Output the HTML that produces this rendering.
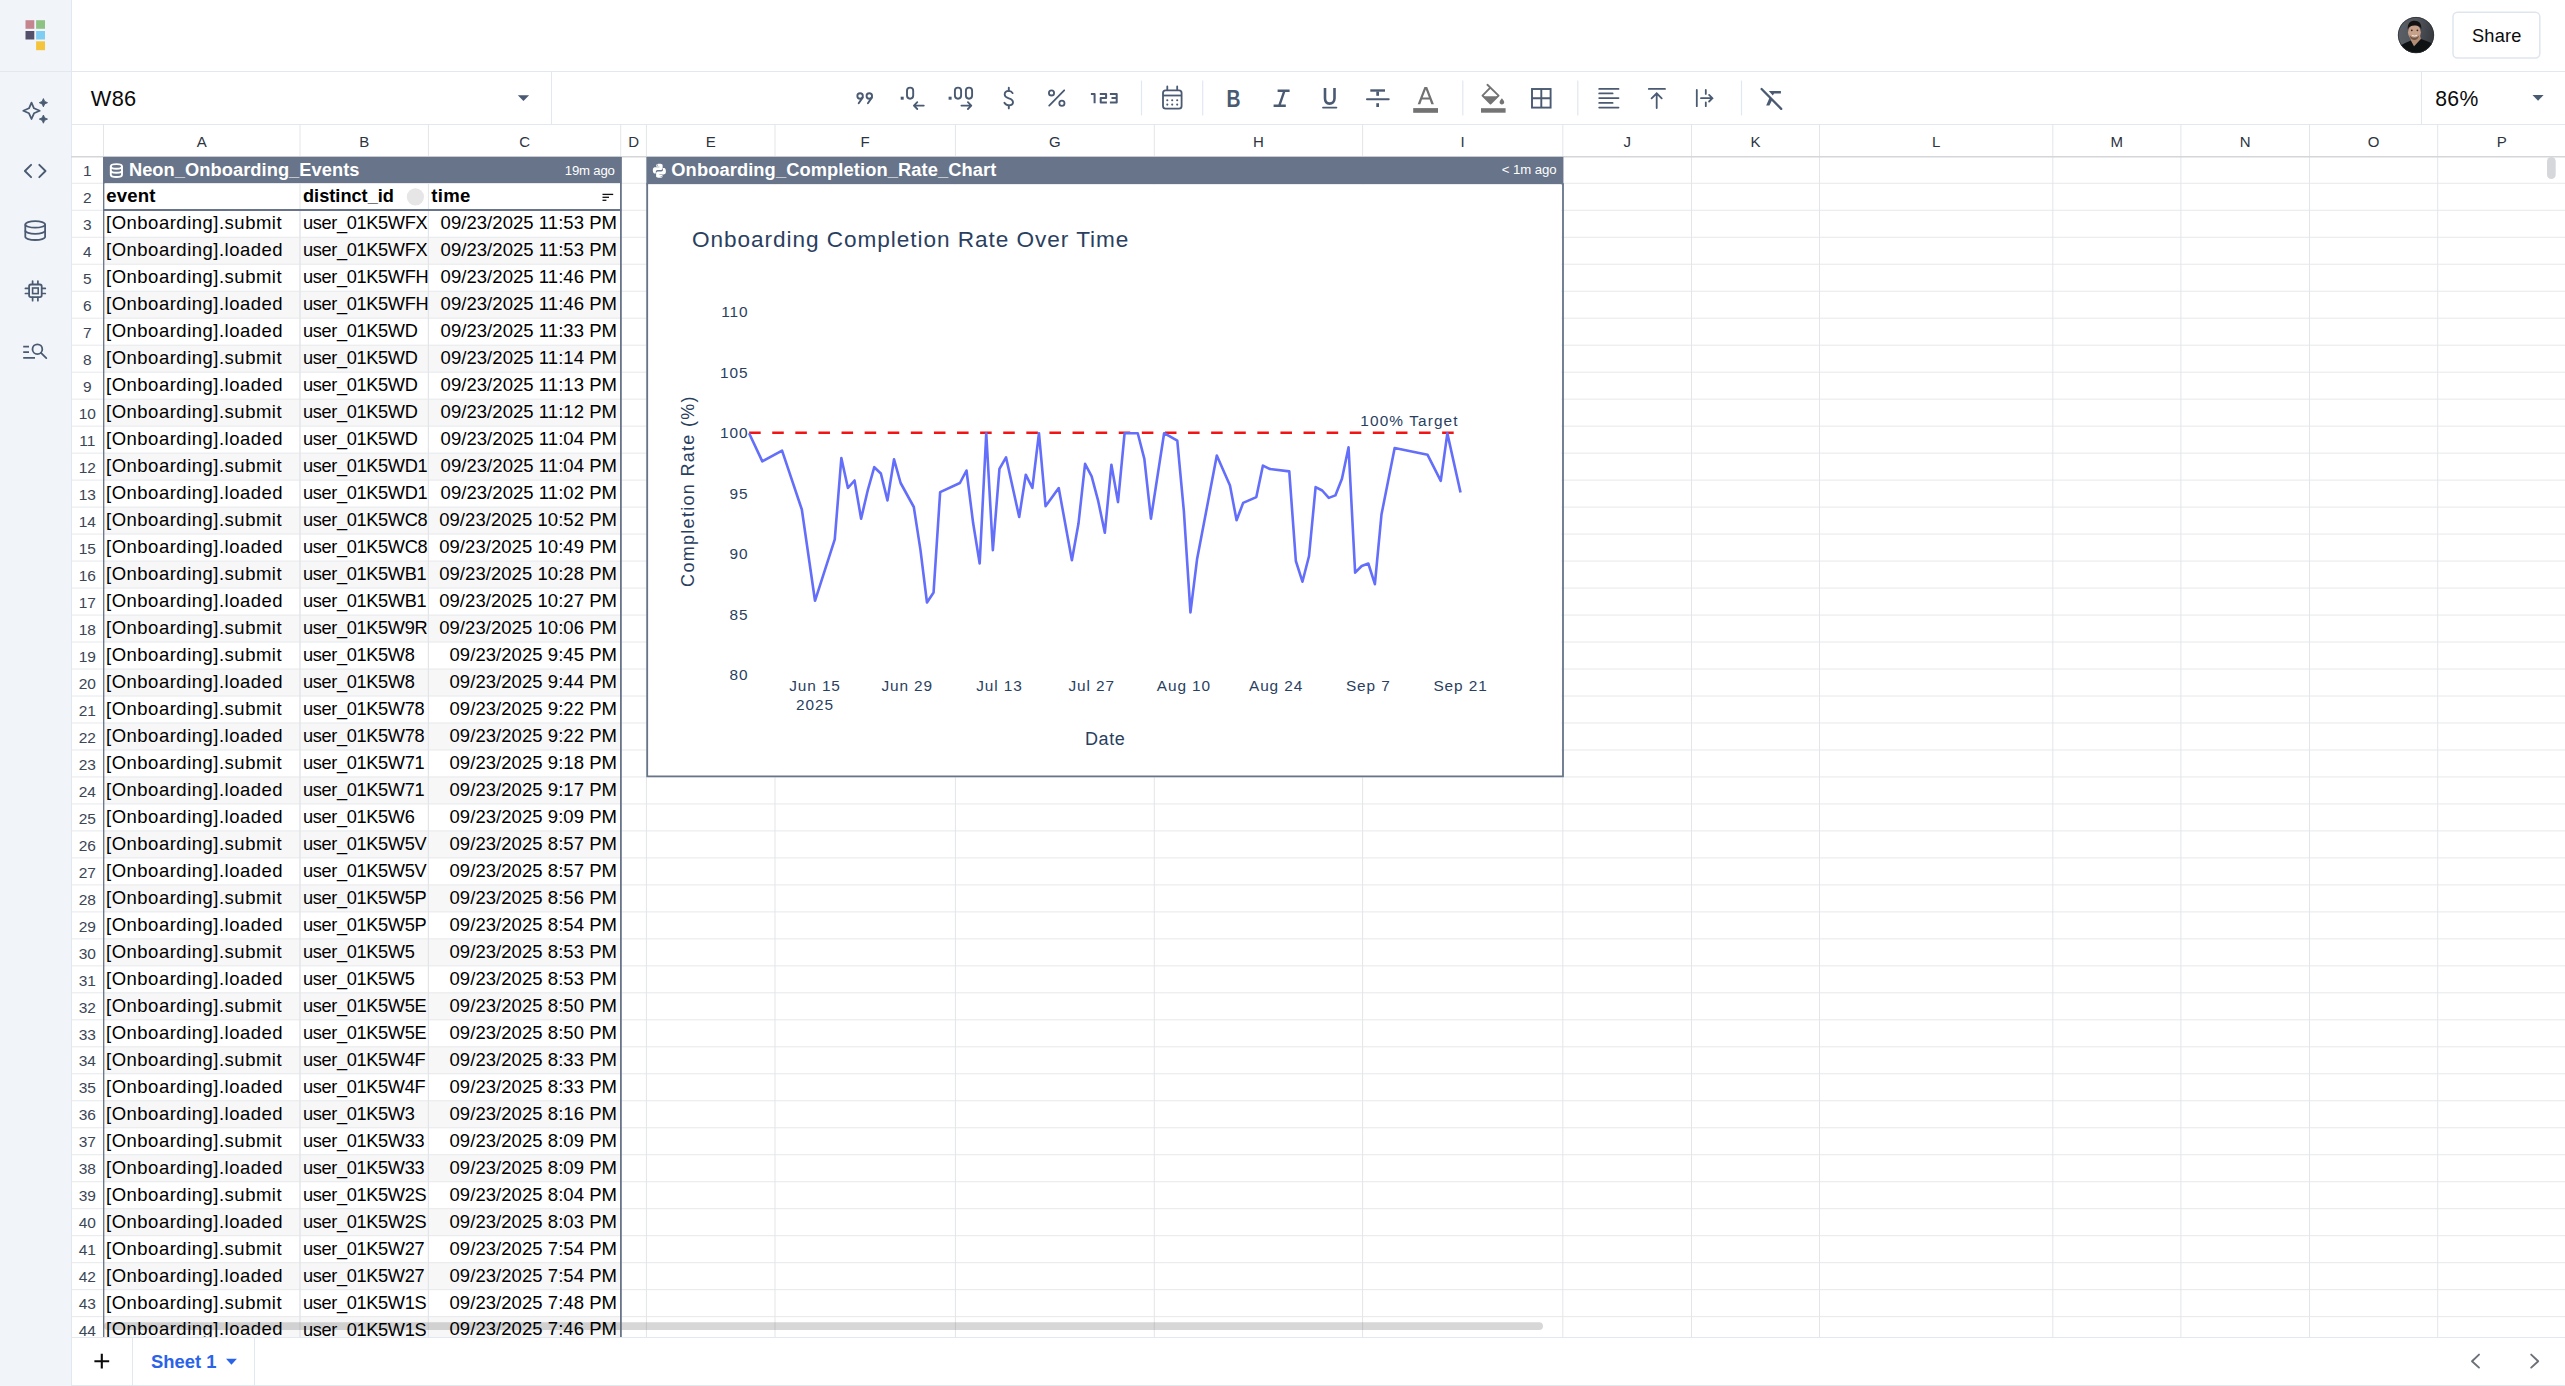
<!DOCTYPE html>
<html><head><meta charset="utf-8"><title>Spreadsheet</title>
<style>
html,body{margin:0;padding:0;width:2565px;height:1386px;overflow:hidden;background:#fff;}
body{font-family:"Liberation Sans", sans-serif;position:relative;}
.abs{position:absolute;}
.t{position:absolute;white-space:pre;font-family:"Liberation Sans", sans-serif;}
</style></head><body>
<div class="abs" style="left:0;top:0;width:71px;height:1386px;background:#f1f5f9;"></div>
<div class="abs" style="left:71px;top:0;width:1px;height:1386px;background:#e2e8f0;"></div>
<div class="abs" style="left:0;top:70.5px;width:2565px;height:1.3px;background:#e2e8f0;"></div>
<div class="abs" style="left:72px;top:123.8px;width:2493px;height:1.3px;background:#e2e8f0;"></div>
<div class="abs" style="left:551px;top:71px;width:1.2px;height:53px;background:#e2e8f0;"></div>
<div class="abs" style="left:2421.2px;top:71px;width:1.2px;height:53px;background:#e2e8f0;"></div>
<svg class="abs" style="left:0;top:0" width="2565" height="1386" viewBox="0 0 2565 1386"><rect x="103.5" y="237.25" width="517.20" height="26.99" fill="#f7f7f7"/><rect x="103.5" y="291.23" width="517.20" height="26.99" fill="#f7f7f7"/><rect x="103.5" y="345.19" width="517.20" height="26.99" fill="#f7f7f7"/><rect x="103.5" y="399.17" width="517.20" height="26.99" fill="#f7f7f7"/><rect x="103.5" y="453.13" width="517.20" height="26.99" fill="#f7f7f7"/><rect x="103.5" y="507.11" width="517.20" height="26.98" fill="#f7f7f7"/><rect x="103.5" y="561.08" width="517.20" height="26.98" fill="#f7f7f7"/><rect x="103.5" y="615.05" width="517.20" height="26.98" fill="#f7f7f7"/><rect x="103.5" y="669.02" width="517.20" height="26.98" fill="#f7f7f7"/><rect x="103.5" y="722.98" width="517.20" height="26.99" fill="#f7f7f7"/><rect x="103.5" y="776.95" width="517.20" height="26.99" fill="#f7f7f7"/><rect x="103.5" y="830.92" width="517.20" height="26.99" fill="#f7f7f7"/><rect x="103.5" y="884.89" width="517.20" height="26.98" fill="#f7f7f7"/><rect x="103.5" y="938.87" width="517.20" height="26.98" fill="#f7f7f7"/><rect x="103.5" y="992.84" width="517.20" height="26.98" fill="#f7f7f7"/><rect x="103.5" y="1046.81" width="517.20" height="26.98" fill="#f7f7f7"/><rect x="103.5" y="1100.78" width="517.20" height="26.98" fill="#f7f7f7"/><rect x="103.5" y="1154.74" width="517.20" height="26.99" fill="#f7f7f7"/><rect x="103.5" y="1208.71" width="517.20" height="26.99" fill="#f7f7f7"/><rect x="103.5" y="1262.68" width="517.20" height="26.98" fill="#f7f7f7"/><rect x="103.5" y="1316.65" width="517.20" height="20.55" fill="#f7f7f7"/><line x1="71" y1="183.29" x2="2565" y2="183.29" stroke="#e6e8eb" stroke-width="1"/><line x1="71" y1="210.27" x2="2565" y2="210.27" stroke="#e6e8eb" stroke-width="1"/><line x1="71" y1="237.25" x2="2565" y2="237.25" stroke="#e6e8eb" stroke-width="1"/><line x1="71" y1="264.24" x2="2565" y2="264.24" stroke="#e6e8eb" stroke-width="1"/><line x1="71" y1="291.23" x2="2565" y2="291.23" stroke="#e6e8eb" stroke-width="1"/><line x1="71" y1="318.21" x2="2565" y2="318.21" stroke="#e6e8eb" stroke-width="1"/><line x1="71" y1="345.19" x2="2565" y2="345.19" stroke="#e6e8eb" stroke-width="1"/><line x1="71" y1="372.18" x2="2565" y2="372.18" stroke="#e6e8eb" stroke-width="1"/><line x1="71" y1="399.17" x2="2565" y2="399.17" stroke="#e6e8eb" stroke-width="1"/><line x1="71" y1="426.15" x2="2565" y2="426.15" stroke="#e6e8eb" stroke-width="1"/><line x1="71" y1="453.13" x2="2565" y2="453.13" stroke="#e6e8eb" stroke-width="1"/><line x1="71" y1="480.12" x2="2565" y2="480.12" stroke="#e6e8eb" stroke-width="1"/><line x1="71" y1="507.11" x2="2565" y2="507.11" stroke="#e6e8eb" stroke-width="1"/><line x1="71" y1="534.09" x2="2565" y2="534.09" stroke="#e6e8eb" stroke-width="1"/><line x1="71" y1="561.08" x2="2565" y2="561.08" stroke="#e6e8eb" stroke-width="1"/><line x1="71" y1="588.06" x2="2565" y2="588.06" stroke="#e6e8eb" stroke-width="1"/><line x1="71" y1="615.05" x2="2565" y2="615.05" stroke="#e6e8eb" stroke-width="1"/><line x1="71" y1="642.03" x2="2565" y2="642.03" stroke="#e6e8eb" stroke-width="1"/><line x1="71" y1="669.02" x2="2565" y2="669.02" stroke="#e6e8eb" stroke-width="1"/><line x1="71" y1="696.00" x2="2565" y2="696.00" stroke="#e6e8eb" stroke-width="1"/><line x1="71" y1="722.98" x2="2565" y2="722.98" stroke="#e6e8eb" stroke-width="1"/><line x1="71" y1="749.97" x2="2565" y2="749.97" stroke="#e6e8eb" stroke-width="1"/><line x1="71" y1="776.95" x2="2565" y2="776.95" stroke="#e6e8eb" stroke-width="1"/><line x1="71" y1="803.94" x2="2565" y2="803.94" stroke="#e6e8eb" stroke-width="1"/><line x1="71" y1="830.92" x2="2565" y2="830.92" stroke="#e6e8eb" stroke-width="1"/><line x1="71" y1="857.91" x2="2565" y2="857.91" stroke="#e6e8eb" stroke-width="1"/><line x1="71" y1="884.89" x2="2565" y2="884.89" stroke="#e6e8eb" stroke-width="1"/><line x1="71" y1="911.88" x2="2565" y2="911.88" stroke="#e6e8eb" stroke-width="1"/><line x1="71" y1="938.87" x2="2565" y2="938.87" stroke="#e6e8eb" stroke-width="1"/><line x1="71" y1="965.85" x2="2565" y2="965.85" stroke="#e6e8eb" stroke-width="1"/><line x1="71" y1="992.84" x2="2565" y2="992.84" stroke="#e6e8eb" stroke-width="1"/><line x1="71" y1="1019.82" x2="2565" y2="1019.82" stroke="#e6e8eb" stroke-width="1"/><line x1="71" y1="1046.81" x2="2565" y2="1046.81" stroke="#e6e8eb" stroke-width="1"/><line x1="71" y1="1073.79" x2="2565" y2="1073.79" stroke="#e6e8eb" stroke-width="1"/><line x1="71" y1="1100.78" x2="2565" y2="1100.78" stroke="#e6e8eb" stroke-width="1"/><line x1="71" y1="1127.76" x2="2565" y2="1127.76" stroke="#e6e8eb" stroke-width="1"/><line x1="71" y1="1154.74" x2="2565" y2="1154.74" stroke="#e6e8eb" stroke-width="1"/><line x1="71" y1="1181.73" x2="2565" y2="1181.73" stroke="#e6e8eb" stroke-width="1"/><line x1="71" y1="1208.71" x2="2565" y2="1208.71" stroke="#e6e8eb" stroke-width="1"/><line x1="71" y1="1235.70" x2="2565" y2="1235.70" stroke="#e6e8eb" stroke-width="1"/><line x1="71" y1="1262.68" x2="2565" y2="1262.68" stroke="#e6e8eb" stroke-width="1"/><line x1="71" y1="1289.67" x2="2565" y2="1289.67" stroke="#e6e8eb" stroke-width="1"/><line x1="71" y1="1316.65" x2="2565" y2="1316.65" stroke="#e6e8eb" stroke-width="1"/><line x1="103.50" y1="124.5" x2="103.50" y2="1337.2" stroke="#e3e5e9" stroke-width="1"/><line x1="300.00" y1="124.5" x2="300.00" y2="1337.2" stroke="#e3e5e9" stroke-width="1"/><line x1="428.40" y1="124.5" x2="428.40" y2="1337.2" stroke="#e3e5e9" stroke-width="1"/><line x1="620.70" y1="124.5" x2="620.70" y2="1337.2" stroke="#e3e5e9" stroke-width="1"/><line x1="646.40" y1="124.5" x2="646.40" y2="1337.2" stroke="#e3e5e9" stroke-width="1"/><line x1="775.00" y1="124.5" x2="775.00" y2="1337.2" stroke="#e3e5e9" stroke-width="1"/><line x1="955.40" y1="124.5" x2="955.40" y2="1337.2" stroke="#e3e5e9" stroke-width="1"/><line x1="1154.30" y1="124.5" x2="1154.30" y2="1337.2" stroke="#e3e5e9" stroke-width="1"/><line x1="1362.60" y1="124.5" x2="1362.60" y2="1337.2" stroke="#e3e5e9" stroke-width="1"/><line x1="1562.80" y1="124.5" x2="1562.80" y2="1337.2" stroke="#e3e5e9" stroke-width="1"/><line x1="1691.50" y1="124.5" x2="1691.50" y2="1337.2" stroke="#e3e5e9" stroke-width="1"/><line x1="1819.50" y1="124.5" x2="1819.50" y2="1337.2" stroke="#e3e5e9" stroke-width="1"/><line x1="2052.80" y1="124.5" x2="2052.80" y2="1337.2" stroke="#e3e5e9" stroke-width="1"/><line x1="2180.90" y1="124.5" x2="2180.90" y2="1337.2" stroke="#e3e5e9" stroke-width="1"/><line x1="2309.50" y1="124.5" x2="2309.50" y2="1337.2" stroke="#e3e5e9" stroke-width="1"/><line x1="2437.70" y1="124.5" x2="2437.70" y2="1337.2" stroke="#e3e5e9" stroke-width="1"/><line x1="71" y1="156.70" x2="2565" y2="156.70" stroke="#d4d6da" stroke-width="1.4"/><rect x="103.5" y="156.90" width="517.80" height="26.59" fill="#677489"/><rect x="104.5" y="183.29" width="516.20" height="26.98" fill="#fff"/><line x1="300.00" y1="183.29" x2="300.00" y2="1337.2" stroke="#e3e5e9" stroke-width="1"/><line x1="428.40" y1="183.29" x2="428.40" y2="1337.2" stroke="#e3e5e9" stroke-width="1"/><line x1="103.5" y1="209.97" x2="621.30" y2="209.97" stroke="#677489" stroke-width="2"/><line x1="103.70" y1="156.90" x2="103.70" y2="1337.2" stroke="#677489" stroke-width="1.3"/><line x1="620.90" y1="156.90" x2="620.90" y2="1337.2" stroke="#677489" stroke-width="1.8"/><circle cx="415.4" cy="196.9" r="8.6" fill="#e6e6e6"/><g stroke="#111" stroke-width="1.3"><line x1="602.5" y1="194.4" x2="613.2" y2="194.4"/><line x1="602.5" y1="197.3" x2="609" y2="197.3"/><line x1="602.5" y1="200.3" x2="606.4" y2="200.3"/></g><g fill="none" stroke="#fff" stroke-width="1.9"><ellipse cx="116.4" cy="166.4" rx="5.6" ry="2.3"/><path d="M110.8 166.3v8.4c0 1.3 2.5 2.3 5.6 2.3s5.6-1 5.6-2.3v-8.4"/><path d="M110.8 170.5c0 1.3 2.5 2.3 5.6 2.3s5.6-1 5.6-2.3"/></g><rect x="646.40" y="156.90" width="917.00" height="27.59" fill="#677489"/><rect x="647.90" y="184.29" width="913.40" height="591.67" fill="#fff"/><path d="M647.20 183.29 V776.45 H1563.00 V183.29" fill="none" stroke="#677489" stroke-width="1.8"/><g transform="translate(651.9,163.3) scale(0.935)"><path fill="#fff" d="M7.9 0.5 C4.5 0.5 4.7 2 4.7 2 V3.6 H8 V4.1 H3.3 C3.3 4.1 1 3.8 1 7.4 C1 11 3 10.9 3 10.9 H4.2 V9.2 C4.2 9.2 4.1 7.2 6.2 7.2 H9.5 C9.5 7.2 11.5 7.2 11.5 5.3 V2.2 C11.5 2.2 11.8 0.5 7.9 0.5 Z"/><path fill="#fff" d="M8.1 15.5 C11.5 15.5 11.3 14 11.3 14 V12.4 H8 V11.9 H12.7 C12.7 11.9 15 12.2 15 8.6 C15 5 13 5.1 13 5.1 H11.8 V6.8 C11.8 6.8 11.9 8.8 9.8 8.8 H6.5 C6.5 8.8 4.5 8.8 4.5 10.7 V13.8 C4.5 13.8 4.2 15.5 8.1 15.5 Z"/><circle cx="6.1" cy="1.9" r="0.6" fill="#677489"/><circle cx="9.9" cy="14.1" r="0.6" fill="#677489"/></g><line x1="749.13" y1="432.7" x2="1460.53" y2="432.7" stroke="#f21414" stroke-width="2.6" stroke-dasharray="11.55 11.55"/><path d="M749.13 433.20 L762.30 461.40 L782.07 450.60 L801.83 509.50 L815.00 600.80 L834.76 539.40 L841.35 458.10 L847.93 488.00 L854.52 480.50 L861.11 518.70 L867.70 490.50 L874.28 467.20 L880.87 473.50 L887.46 500.40 L894.04 459.30 L900.63 483.00 L913.80 507.00 L920.39 549.40 L926.98 602.50 L933.57 592.50 L940.15 492.10 L959.91 483.00 L966.50 470.50 L973.09 522.80 L979.67 563.50 L986.26 433.20 L992.85 550.20 L999.44 468.90 L1006.02 457.30 L1019.20 517.00 L1025.78 474.70 L1032.37 488.00 L1038.96 433.20 L1045.55 506.20 L1058.72 488.00 L1071.89 560.20 L1078.48 523.60 L1085.07 463.90 L1091.65 476.30 L1098.24 501.20 L1104.83 532.80 L1111.41 464.70 L1118.00 502.10 L1124.59 433.20 L1137.76 433.20 L1144.35 458.90 L1150.94 518.70 L1164.11 433.20 L1177.28 440.70 L1183.87 511.20 L1190.46 612.40 L1197.05 559.30 L1216.81 455.60 L1229.98 485.50 L1236.57 520.30 L1243.15 502.90 L1256.33 497.10 L1262.92 465.60 L1269.50 468.90 L1289.26 471.40 L1295.85 561.00 L1302.44 581.70 L1309.03 556.00 L1315.61 487.10 L1322.20 490.50 L1328.79 497.90 L1335.37 495.40 L1341.96 478.80 L1348.55 447.30 L1355.13 572.60 L1361.72 566.00 L1368.31 563.50 L1374.89 584.20 L1381.48 514.50 L1394.66 448.10 L1427.59 454.80 L1440.76 480.90 L1447.35 433.40 L1460.53 492.50" fill="none" stroke="#636efa" stroke-width="2.6" stroke-linejoin="round"/><rect x="104" y="1322.2" width="1439" height="7.8" rx="3.9" fill="rgba(110,110,110,0.28)"/><rect x="2547" y="157" width="8.7" height="22" rx="4.35" fill="#d6d7db"/></svg>
<div class="abs" style="left:71.5px;top:1337px;width:2494px;height:49px;background:#fff;"></div>
<div class="abs" style="left:71px;top:1336.8px;width:2494px;height:1.2px;background:#e2e8f0;"></div>
<div class="abs" style="left:71px;top:1384.6px;width:2494px;height:1.4px;background:#e2e8f0;"></div>
<div class="abs" style="left:132px;top:1337px;width:1.2px;height:48px;background:#e2e8f0;"></div>
<div class="abs" style="left:254.3px;top:1337px;width:1.2px;height:48px;background:#e2e8f0;"></div>
<div class="t" style="top:133.60px;font-size:15px;line-height:15px;font-weight:400;color:#2b3440;left:-298.25px;width:1000px;text-align:center;">A</div>
<div class="t" style="top:133.60px;font-size:15px;line-height:15px;font-weight:400;color:#2b3440;left:-135.80px;width:1000px;text-align:center;">B</div>
<div class="t" style="top:133.60px;font-size:15px;line-height:15px;font-weight:400;color:#2b3440;left:24.55px;width:1000px;text-align:center;">C</div>
<div class="t" style="top:133.60px;font-size:15px;line-height:15px;font-weight:400;color:#2b3440;left:133.55px;width:1000px;text-align:center;">D</div>
<div class="t" style="top:133.60px;font-size:15px;line-height:15px;font-weight:400;color:#2b3440;left:210.70px;width:1000px;text-align:center;">E</div>
<div class="t" style="top:133.60px;font-size:15px;line-height:15px;font-weight:400;color:#2b3440;left:365.20px;width:1000px;text-align:center;">F</div>
<div class="t" style="top:133.60px;font-size:15px;line-height:15px;font-weight:400;color:#2b3440;left:554.85px;width:1000px;text-align:center;">G</div>
<div class="t" style="top:133.60px;font-size:15px;line-height:15px;font-weight:400;color:#2b3440;left:758.45px;width:1000px;text-align:center;">H</div>
<div class="t" style="top:133.60px;font-size:15px;line-height:15px;font-weight:400;color:#2b3440;left:962.70px;width:1000px;text-align:center;">I</div>
<div class="t" style="top:133.60px;font-size:15px;line-height:15px;font-weight:400;color:#2b3440;left:1127.15px;width:1000px;text-align:center;">J</div>
<div class="t" style="top:133.60px;font-size:15px;line-height:15px;font-weight:400;color:#2b3440;left:1255.50px;width:1000px;text-align:center;">K</div>
<div class="t" style="top:133.60px;font-size:15px;line-height:15px;font-weight:400;color:#2b3440;left:1436.15px;width:1000px;text-align:center;">L</div>
<div class="t" style="top:133.60px;font-size:15px;line-height:15px;font-weight:400;color:#2b3440;left:1616.85px;width:1000px;text-align:center;">M</div>
<div class="t" style="top:133.60px;font-size:15px;line-height:15px;font-weight:400;color:#2b3440;left:1745.20px;width:1000px;text-align:center;">N</div>
<div class="t" style="top:133.60px;font-size:15px;line-height:15px;font-weight:400;color:#2b3440;left:1873.60px;width:1000px;text-align:center;">O</div>
<div class="t" style="top:133.60px;font-size:15px;line-height:15px;font-weight:400;color:#2b3440;left:2001.85px;width:1000px;text-align:center;">P</div>
<div class="t" style="top:162.98px;font-size:15.5px;line-height:15.5px;font-weight:400;color:#3b4656;left:-412.70px;width:1000px;text-align:center;">1</div>
<div class="t" style="top:189.96px;font-size:15.5px;line-height:15.5px;font-weight:400;color:#3b4656;left:-412.70px;width:1000px;text-align:center;">2</div>
<div class="t" style="top:216.95px;font-size:15.5px;line-height:15.5px;font-weight:400;color:#3b4656;left:-412.70px;width:1000px;text-align:center;">3</div>
<div class="t" style="top:243.93px;font-size:15.5px;line-height:15.5px;font-weight:400;color:#3b4656;left:-412.70px;width:1000px;text-align:center;">4</div>
<div class="t" style="top:270.92px;font-size:15.5px;line-height:15.5px;font-weight:400;color:#3b4656;left:-412.70px;width:1000px;text-align:center;">5</div>
<div class="t" style="top:297.90px;font-size:15.5px;line-height:15.5px;font-weight:400;color:#3b4656;left:-412.70px;width:1000px;text-align:center;">6</div>
<div class="t" style="top:324.89px;font-size:15.5px;line-height:15.5px;font-weight:400;color:#3b4656;left:-412.70px;width:1000px;text-align:center;">7</div>
<div class="t" style="top:351.87px;font-size:15.5px;line-height:15.5px;font-weight:400;color:#3b4656;left:-412.70px;width:1000px;text-align:center;">8</div>
<div class="t" style="top:378.86px;font-size:15.5px;line-height:15.5px;font-weight:400;color:#3b4656;left:-412.70px;width:1000px;text-align:center;">9</div>
<div class="t" style="top:405.84px;font-size:15.5px;line-height:15.5px;font-weight:400;color:#3b4656;left:-412.70px;width:1000px;text-align:center;">10</div>
<div class="t" style="top:432.83px;font-size:15.5px;line-height:15.5px;font-weight:400;color:#3b4656;left:-412.70px;width:1000px;text-align:center;">11</div>
<div class="t" style="top:459.81px;font-size:15.5px;line-height:15.5px;font-weight:400;color:#3b4656;left:-412.70px;width:1000px;text-align:center;">12</div>
<div class="t" style="top:486.80px;font-size:15.5px;line-height:15.5px;font-weight:400;color:#3b4656;left:-412.70px;width:1000px;text-align:center;">13</div>
<div class="t" style="top:513.78px;font-size:15.5px;line-height:15.5px;font-weight:400;color:#3b4656;left:-412.70px;width:1000px;text-align:center;">14</div>
<div class="t" style="top:540.77px;font-size:15.5px;line-height:15.5px;font-weight:400;color:#3b4656;left:-412.70px;width:1000px;text-align:center;">15</div>
<div class="t" style="top:567.75px;font-size:15.5px;line-height:15.5px;font-weight:400;color:#3b4656;left:-412.70px;width:1000px;text-align:center;">16</div>
<div class="t" style="top:594.74px;font-size:15.5px;line-height:15.5px;font-weight:400;color:#3b4656;left:-412.70px;width:1000px;text-align:center;">17</div>
<div class="t" style="top:621.72px;font-size:15.5px;line-height:15.5px;font-weight:400;color:#3b4656;left:-412.70px;width:1000px;text-align:center;">18</div>
<div class="t" style="top:648.71px;font-size:15.5px;line-height:15.5px;font-weight:400;color:#3b4656;left:-412.70px;width:1000px;text-align:center;">19</div>
<div class="t" style="top:675.69px;font-size:15.5px;line-height:15.5px;font-weight:400;color:#3b4656;left:-412.70px;width:1000px;text-align:center;">20</div>
<div class="t" style="top:702.68px;font-size:15.5px;line-height:15.5px;font-weight:400;color:#3b4656;left:-412.70px;width:1000px;text-align:center;">21</div>
<div class="t" style="top:729.66px;font-size:15.5px;line-height:15.5px;font-weight:400;color:#3b4656;left:-412.70px;width:1000px;text-align:center;">22</div>
<div class="t" style="top:756.65px;font-size:15.5px;line-height:15.5px;font-weight:400;color:#3b4656;left:-412.70px;width:1000px;text-align:center;">23</div>
<div class="t" style="top:783.63px;font-size:15.5px;line-height:15.5px;font-weight:400;color:#3b4656;left:-412.70px;width:1000px;text-align:center;">24</div>
<div class="t" style="top:810.62px;font-size:15.5px;line-height:15.5px;font-weight:400;color:#3b4656;left:-412.70px;width:1000px;text-align:center;">25</div>
<div class="t" style="top:837.60px;font-size:15.5px;line-height:15.5px;font-weight:400;color:#3b4656;left:-412.70px;width:1000px;text-align:center;">26</div>
<div class="t" style="top:864.59px;font-size:15.5px;line-height:15.5px;font-weight:400;color:#3b4656;left:-412.70px;width:1000px;text-align:center;">27</div>
<div class="t" style="top:891.57px;font-size:15.5px;line-height:15.5px;font-weight:400;color:#3b4656;left:-412.70px;width:1000px;text-align:center;">28</div>
<div class="t" style="top:918.56px;font-size:15.5px;line-height:15.5px;font-weight:400;color:#3b4656;left:-412.70px;width:1000px;text-align:center;">29</div>
<div class="t" style="top:945.54px;font-size:15.5px;line-height:15.5px;font-weight:400;color:#3b4656;left:-412.70px;width:1000px;text-align:center;">30</div>
<div class="t" style="top:972.53px;font-size:15.5px;line-height:15.5px;font-weight:400;color:#3b4656;left:-412.70px;width:1000px;text-align:center;">31</div>
<div class="t" style="top:999.51px;font-size:15.5px;line-height:15.5px;font-weight:400;color:#3b4656;left:-412.70px;width:1000px;text-align:center;">32</div>
<div class="t" style="top:1026.50px;font-size:15.5px;line-height:15.5px;font-weight:400;color:#3b4656;left:-412.70px;width:1000px;text-align:center;">33</div>
<div class="t" style="top:1053.48px;font-size:15.5px;line-height:15.5px;font-weight:400;color:#3b4656;left:-412.70px;width:1000px;text-align:center;">34</div>
<div class="t" style="top:1080.47px;font-size:15.5px;line-height:15.5px;font-weight:400;color:#3b4656;left:-412.70px;width:1000px;text-align:center;">35</div>
<div class="t" style="top:1107.45px;font-size:15.5px;line-height:15.5px;font-weight:400;color:#3b4656;left:-412.70px;width:1000px;text-align:center;">36</div>
<div class="t" style="top:1134.44px;font-size:15.5px;line-height:15.5px;font-weight:400;color:#3b4656;left:-412.70px;width:1000px;text-align:center;">37</div>
<div class="t" style="top:1161.42px;font-size:15.5px;line-height:15.5px;font-weight:400;color:#3b4656;left:-412.70px;width:1000px;text-align:center;">38</div>
<div class="t" style="top:1188.41px;font-size:15.5px;line-height:15.5px;font-weight:400;color:#3b4656;left:-412.70px;width:1000px;text-align:center;">39</div>
<div class="t" style="top:1215.39px;font-size:15.5px;line-height:15.5px;font-weight:400;color:#3b4656;left:-412.70px;width:1000px;text-align:center;">40</div>
<div class="t" style="top:1242.38px;font-size:15.5px;line-height:15.5px;font-weight:400;color:#3b4656;left:-412.70px;width:1000px;text-align:center;">41</div>
<div class="t" style="top:1269.36px;font-size:15.5px;line-height:15.5px;font-weight:400;color:#3b4656;left:-412.70px;width:1000px;text-align:center;">42</div>
<div class="t" style="top:1296.35px;font-size:15.5px;line-height:15.5px;font-weight:400;color:#3b4656;left:-412.70px;width:1000px;text-align:center;">43</div>
<div class="t" style="top:1323.33px;font-size:15.5px;line-height:15.5px;font-weight:400;color:#3b4656;left:-412.70px;width:1000px;text-align:center;">44</div>
<div class="abs" style="left:104.50px;top:210.27px;width:195.50px;height:1126.93px;overflow:hidden;"><div class="abs" style="left:-104.50px;top:-210.27px;width:2565px;height:1386px;"><div class="t" style="top:214.11px;font-size:18.5px;line-height:18.5px;font-weight:400;color:#000;letter-spacing:0.5px;left:106.00px;">[Onboarding].submit</div>
<div class="t" style="top:241.09px;font-size:18.5px;line-height:18.5px;font-weight:400;color:#000;letter-spacing:0.5px;left:106.00px;">[Onboarding].loaded</div>
<div class="t" style="top:268.08px;font-size:18.5px;line-height:18.5px;font-weight:400;color:#000;letter-spacing:0.5px;left:106.00px;">[Onboarding].submit</div>
<div class="t" style="top:295.06px;font-size:18.5px;line-height:18.5px;font-weight:400;color:#000;letter-spacing:0.5px;left:106.00px;">[Onboarding].loaded</div>
<div class="t" style="top:322.05px;font-size:18.5px;line-height:18.5px;font-weight:400;color:#000;letter-spacing:0.5px;left:106.00px;">[Onboarding].loaded</div>
<div class="t" style="top:349.03px;font-size:18.5px;line-height:18.5px;font-weight:400;color:#000;letter-spacing:0.5px;left:106.00px;">[Onboarding].submit</div>
<div class="t" style="top:376.02px;font-size:18.5px;line-height:18.5px;font-weight:400;color:#000;letter-spacing:0.5px;left:106.00px;">[Onboarding].loaded</div>
<div class="t" style="top:403.00px;font-size:18.5px;line-height:18.5px;font-weight:400;color:#000;letter-spacing:0.5px;left:106.00px;">[Onboarding].submit</div>
<div class="t" style="top:429.99px;font-size:18.5px;line-height:18.5px;font-weight:400;color:#000;letter-spacing:0.5px;left:106.00px;">[Onboarding].loaded</div>
<div class="t" style="top:456.97px;font-size:18.5px;line-height:18.5px;font-weight:400;color:#000;letter-spacing:0.5px;left:106.00px;">[Onboarding].submit</div>
<div class="t" style="top:483.96px;font-size:18.5px;line-height:18.5px;font-weight:400;color:#000;letter-spacing:0.5px;left:106.00px;">[Onboarding].loaded</div>
<div class="t" style="top:510.94px;font-size:18.5px;line-height:18.5px;font-weight:400;color:#000;letter-spacing:0.5px;left:106.00px;">[Onboarding].submit</div>
<div class="t" style="top:537.93px;font-size:18.5px;line-height:18.5px;font-weight:400;color:#000;letter-spacing:0.5px;left:106.00px;">[Onboarding].loaded</div>
<div class="t" style="top:564.91px;font-size:18.5px;line-height:18.5px;font-weight:400;color:#000;letter-spacing:0.5px;left:106.00px;">[Onboarding].submit</div>
<div class="t" style="top:591.90px;font-size:18.5px;line-height:18.5px;font-weight:400;color:#000;letter-spacing:0.5px;left:106.00px;">[Onboarding].loaded</div>
<div class="t" style="top:618.88px;font-size:18.5px;line-height:18.5px;font-weight:400;color:#000;letter-spacing:0.5px;left:106.00px;">[Onboarding].submit</div>
<div class="t" style="top:645.87px;font-size:18.5px;line-height:18.5px;font-weight:400;color:#000;letter-spacing:0.5px;left:106.00px;">[Onboarding].submit</div>
<div class="t" style="top:672.85px;font-size:18.5px;line-height:18.5px;font-weight:400;color:#000;letter-spacing:0.5px;left:106.00px;">[Onboarding].loaded</div>
<div class="t" style="top:699.84px;font-size:18.5px;line-height:18.5px;font-weight:400;color:#000;letter-spacing:0.5px;left:106.00px;">[Onboarding].submit</div>
<div class="t" style="top:726.82px;font-size:18.5px;line-height:18.5px;font-weight:400;color:#000;letter-spacing:0.5px;left:106.00px;">[Onboarding].loaded</div>
<div class="t" style="top:753.81px;font-size:18.5px;line-height:18.5px;font-weight:400;color:#000;letter-spacing:0.5px;left:106.00px;">[Onboarding].submit</div>
<div class="t" style="top:780.79px;font-size:18.5px;line-height:18.5px;font-weight:400;color:#000;letter-spacing:0.5px;left:106.00px;">[Onboarding].loaded</div>
<div class="t" style="top:807.78px;font-size:18.5px;line-height:18.5px;font-weight:400;color:#000;letter-spacing:0.5px;left:106.00px;">[Onboarding].loaded</div>
<div class="t" style="top:834.76px;font-size:18.5px;line-height:18.5px;font-weight:400;color:#000;letter-spacing:0.5px;left:106.00px;">[Onboarding].submit</div>
<div class="t" style="top:861.75px;font-size:18.5px;line-height:18.5px;font-weight:400;color:#000;letter-spacing:0.5px;left:106.00px;">[Onboarding].loaded</div>
<div class="t" style="top:888.73px;font-size:18.5px;line-height:18.5px;font-weight:400;color:#000;letter-spacing:0.5px;left:106.00px;">[Onboarding].submit</div>
<div class="t" style="top:915.72px;font-size:18.5px;line-height:18.5px;font-weight:400;color:#000;letter-spacing:0.5px;left:106.00px;">[Onboarding].loaded</div>
<div class="t" style="top:942.70px;font-size:18.5px;line-height:18.5px;font-weight:400;color:#000;letter-spacing:0.5px;left:106.00px;">[Onboarding].submit</div>
<div class="t" style="top:969.69px;font-size:18.5px;line-height:18.5px;font-weight:400;color:#000;letter-spacing:0.5px;left:106.00px;">[Onboarding].loaded</div>
<div class="t" style="top:996.67px;font-size:18.5px;line-height:18.5px;font-weight:400;color:#000;letter-spacing:0.5px;left:106.00px;">[Onboarding].submit</div>
<div class="t" style="top:1023.66px;font-size:18.5px;line-height:18.5px;font-weight:400;color:#000;letter-spacing:0.5px;left:106.00px;">[Onboarding].loaded</div>
<div class="t" style="top:1050.64px;font-size:18.5px;line-height:18.5px;font-weight:400;color:#000;letter-spacing:0.5px;left:106.00px;">[Onboarding].submit</div>
<div class="t" style="top:1077.63px;font-size:18.5px;line-height:18.5px;font-weight:400;color:#000;letter-spacing:0.5px;left:106.00px;">[Onboarding].loaded</div>
<div class="t" style="top:1104.61px;font-size:18.5px;line-height:18.5px;font-weight:400;color:#000;letter-spacing:0.5px;left:106.00px;">[Onboarding].loaded</div>
<div class="t" style="top:1131.60px;font-size:18.5px;line-height:18.5px;font-weight:400;color:#000;letter-spacing:0.5px;left:106.00px;">[Onboarding].submit</div>
<div class="t" style="top:1158.58px;font-size:18.5px;line-height:18.5px;font-weight:400;color:#000;letter-spacing:0.5px;left:106.00px;">[Onboarding].loaded</div>
<div class="t" style="top:1185.57px;font-size:18.5px;line-height:18.5px;font-weight:400;color:#000;letter-spacing:0.5px;left:106.00px;">[Onboarding].submit</div>
<div class="t" style="top:1212.55px;font-size:18.5px;line-height:18.5px;font-weight:400;color:#000;letter-spacing:0.5px;left:106.00px;">[Onboarding].loaded</div>
<div class="t" style="top:1239.54px;font-size:18.5px;line-height:18.5px;font-weight:400;color:#000;letter-spacing:0.5px;left:106.00px;">[Onboarding].submit</div>
<div class="t" style="top:1266.52px;font-size:18.5px;line-height:18.5px;font-weight:400;color:#000;letter-spacing:0.5px;left:106.00px;">[Onboarding].loaded</div>
<div class="t" style="top:1293.51px;font-size:18.5px;line-height:18.5px;font-weight:400;color:#000;letter-spacing:0.5px;left:106.00px;">[Onboarding].submit</div>
<div class="t" style="top:1320.49px;font-size:18.5px;line-height:18.5px;font-weight:400;color:#000;letter-spacing:0.5px;left:106.00px;">[Onboarding].loaded</div>
</div></div>
<div class="abs" style="left:300.50px;top:210.27px;width:127.90px;height:1126.93px;overflow:hidden;"><div class="abs" style="left:-300.50px;top:-210.27px;width:2565px;height:1386px;"><div class="t" style="top:214.36px;font-size:18.2px;line-height:18.2px;font-weight:400;color:#000;letter-spacing:-0.35px;left:303.00px;">user_01K5WFX</div>
<div class="t" style="top:241.35px;font-size:18.2px;line-height:18.2px;font-weight:400;color:#000;letter-spacing:-0.35px;left:303.00px;">user_01K5WFX</div>
<div class="t" style="top:268.33px;font-size:18.2px;line-height:18.2px;font-weight:400;color:#000;letter-spacing:-0.35px;left:303.00px;">user_01K5WFH</div>
<div class="t" style="top:295.32px;font-size:18.2px;line-height:18.2px;font-weight:400;color:#000;letter-spacing:-0.35px;left:303.00px;">user_01K5WFH</div>
<div class="t" style="top:322.30px;font-size:18.2px;line-height:18.2px;font-weight:400;color:#000;letter-spacing:-0.35px;left:303.00px;">user_01K5WD</div>
<div class="t" style="top:349.29px;font-size:18.2px;line-height:18.2px;font-weight:400;color:#000;letter-spacing:-0.35px;left:303.00px;">user_01K5WD</div>
<div class="t" style="top:376.27px;font-size:18.2px;line-height:18.2px;font-weight:400;color:#000;letter-spacing:-0.35px;left:303.00px;">user_01K5WD</div>
<div class="t" style="top:403.26px;font-size:18.2px;line-height:18.2px;font-weight:400;color:#000;letter-spacing:-0.35px;left:303.00px;">user_01K5WD</div>
<div class="t" style="top:430.24px;font-size:18.2px;line-height:18.2px;font-weight:400;color:#000;letter-spacing:-0.35px;left:303.00px;">user_01K5WD</div>
<div class="t" style="top:457.23px;font-size:18.2px;line-height:18.2px;font-weight:400;color:#000;letter-spacing:-0.35px;left:303.00px;">user_01K5WD1</div>
<div class="t" style="top:484.21px;font-size:18.2px;line-height:18.2px;font-weight:400;color:#000;letter-spacing:-0.35px;left:303.00px;">user_01K5WD1</div>
<div class="t" style="top:511.20px;font-size:18.2px;line-height:18.2px;font-weight:400;color:#000;letter-spacing:-0.35px;left:303.00px;">user_01K5WC8</div>
<div class="t" style="top:538.18px;font-size:18.2px;line-height:18.2px;font-weight:400;color:#000;letter-spacing:-0.35px;left:303.00px;">user_01K5WC8</div>
<div class="t" style="top:565.17px;font-size:18.2px;line-height:18.2px;font-weight:400;color:#000;letter-spacing:-0.35px;left:303.00px;">user_01K5WB1</div>
<div class="t" style="top:592.15px;font-size:18.2px;line-height:18.2px;font-weight:400;color:#000;letter-spacing:-0.35px;left:303.00px;">user_01K5WB1</div>
<div class="t" style="top:619.14px;font-size:18.2px;line-height:18.2px;font-weight:400;color:#000;letter-spacing:-0.35px;left:303.00px;">user_01K5W9R</div>
<div class="t" style="top:646.12px;font-size:18.2px;line-height:18.2px;font-weight:400;color:#000;letter-spacing:-0.35px;left:303.00px;">user_01K5W8</div>
<div class="t" style="top:673.11px;font-size:18.2px;line-height:18.2px;font-weight:400;color:#000;letter-spacing:-0.35px;left:303.00px;">user_01K5W8</div>
<div class="t" style="top:700.09px;font-size:18.2px;line-height:18.2px;font-weight:400;color:#000;letter-spacing:-0.35px;left:303.00px;">user_01K5W78</div>
<div class="t" style="top:727.08px;font-size:18.2px;line-height:18.2px;font-weight:400;color:#000;letter-spacing:-0.35px;left:303.00px;">user_01K5W78</div>
<div class="t" style="top:754.06px;font-size:18.2px;line-height:18.2px;font-weight:400;color:#000;letter-spacing:-0.35px;left:303.00px;">user_01K5W71</div>
<div class="t" style="top:781.05px;font-size:18.2px;line-height:18.2px;font-weight:400;color:#000;letter-spacing:-0.35px;left:303.00px;">user_01K5W71</div>
<div class="t" style="top:808.03px;font-size:18.2px;line-height:18.2px;font-weight:400;color:#000;letter-spacing:-0.35px;left:303.00px;">user_01K5W6</div>
<div class="t" style="top:835.02px;font-size:18.2px;line-height:18.2px;font-weight:400;color:#000;letter-spacing:-0.35px;left:303.00px;">user_01K5W5V</div>
<div class="t" style="top:862.00px;font-size:18.2px;line-height:18.2px;font-weight:400;color:#000;letter-spacing:-0.35px;left:303.00px;">user_01K5W5V</div>
<div class="t" style="top:888.99px;font-size:18.2px;line-height:18.2px;font-weight:400;color:#000;letter-spacing:-0.35px;left:303.00px;">user_01K5W5P</div>
<div class="t" style="top:915.97px;font-size:18.2px;line-height:18.2px;font-weight:400;color:#000;letter-spacing:-0.35px;left:303.00px;">user_01K5W5P</div>
<div class="t" style="top:942.96px;font-size:18.2px;line-height:18.2px;font-weight:400;color:#000;letter-spacing:-0.35px;left:303.00px;">user_01K5W5</div>
<div class="t" style="top:969.94px;font-size:18.2px;line-height:18.2px;font-weight:400;color:#000;letter-spacing:-0.35px;left:303.00px;">user_01K5W5</div>
<div class="t" style="top:996.93px;font-size:18.2px;line-height:18.2px;font-weight:400;color:#000;letter-spacing:-0.35px;left:303.00px;">user_01K5W5E</div>
<div class="t" style="top:1023.91px;font-size:18.2px;line-height:18.2px;font-weight:400;color:#000;letter-spacing:-0.35px;left:303.00px;">user_01K5W5E</div>
<div class="t" style="top:1050.90px;font-size:18.2px;line-height:18.2px;font-weight:400;color:#000;letter-spacing:-0.35px;left:303.00px;">user_01K5W4F</div>
<div class="t" style="top:1077.88px;font-size:18.2px;line-height:18.2px;font-weight:400;color:#000;letter-spacing:-0.35px;left:303.00px;">user_01K5W4F</div>
<div class="t" style="top:1104.87px;font-size:18.2px;line-height:18.2px;font-weight:400;color:#000;letter-spacing:-0.35px;left:303.00px;">user_01K5W3</div>
<div class="t" style="top:1131.85px;font-size:18.2px;line-height:18.2px;font-weight:400;color:#000;letter-spacing:-0.35px;left:303.00px;">user_01K5W33</div>
<div class="t" style="top:1158.84px;font-size:18.2px;line-height:18.2px;font-weight:400;color:#000;letter-spacing:-0.35px;left:303.00px;">user_01K5W33</div>
<div class="t" style="top:1185.82px;font-size:18.2px;line-height:18.2px;font-weight:400;color:#000;letter-spacing:-0.35px;left:303.00px;">user_01K5W2S</div>
<div class="t" style="top:1212.81px;font-size:18.2px;line-height:18.2px;font-weight:400;color:#000;letter-spacing:-0.35px;left:303.00px;">user_01K5W2S</div>
<div class="t" style="top:1239.79px;font-size:18.2px;line-height:18.2px;font-weight:400;color:#000;letter-spacing:-0.35px;left:303.00px;">user_01K5W27</div>
<div class="t" style="top:1266.78px;font-size:18.2px;line-height:18.2px;font-weight:400;color:#000;letter-spacing:-0.35px;left:303.00px;">user_01K5W27</div>
<div class="t" style="top:1293.76px;font-size:18.2px;line-height:18.2px;font-weight:400;color:#000;letter-spacing:-0.35px;left:303.00px;">user_01K5W1S</div>
<div class="t" style="top:1320.75px;font-size:18.2px;line-height:18.2px;font-weight:400;color:#000;letter-spacing:-0.35px;left:303.00px;">user_01K5W1S</div>
</div></div>
<div class="abs" style="left:428.90px;top:210.27px;width:191.80px;height:1126.93px;overflow:hidden;"><div class="abs" style="left:-428.90px;top:-210.27px;width:2565px;height:1386px;"><div class="t" style="top:214.11px;font-size:18.5px;line-height:18.5px;font-weight:400;color:#000;letter-spacing:0.05px;right:1947.95px;text-align:right;">09/23/2025 11:53 PM</div>
<div class="t" style="top:241.09px;font-size:18.5px;line-height:18.5px;font-weight:400;color:#000;letter-spacing:0.05px;right:1947.95px;text-align:right;">09/23/2025 11:53 PM</div>
<div class="t" style="top:268.08px;font-size:18.5px;line-height:18.5px;font-weight:400;color:#000;letter-spacing:0.05px;right:1947.95px;text-align:right;">09/23/2025 11:46 PM</div>
<div class="t" style="top:295.06px;font-size:18.5px;line-height:18.5px;font-weight:400;color:#000;letter-spacing:0.05px;right:1947.95px;text-align:right;">09/23/2025 11:46 PM</div>
<div class="t" style="top:322.05px;font-size:18.5px;line-height:18.5px;font-weight:400;color:#000;letter-spacing:0.05px;right:1947.95px;text-align:right;">09/23/2025 11:33 PM</div>
<div class="t" style="top:349.03px;font-size:18.5px;line-height:18.5px;font-weight:400;color:#000;letter-spacing:0.05px;right:1947.95px;text-align:right;">09/23/2025 11:14 PM</div>
<div class="t" style="top:376.02px;font-size:18.5px;line-height:18.5px;font-weight:400;color:#000;letter-spacing:0.05px;right:1947.95px;text-align:right;">09/23/2025 11:13 PM</div>
<div class="t" style="top:403.00px;font-size:18.5px;line-height:18.5px;font-weight:400;color:#000;letter-spacing:0.05px;right:1947.95px;text-align:right;">09/23/2025 11:12 PM</div>
<div class="t" style="top:429.99px;font-size:18.5px;line-height:18.5px;font-weight:400;color:#000;letter-spacing:0.05px;right:1947.95px;text-align:right;">09/23/2025 11:04 PM</div>
<div class="t" style="top:456.97px;font-size:18.5px;line-height:18.5px;font-weight:400;color:#000;letter-spacing:0.05px;right:1947.95px;text-align:right;">09/23/2025 11:04 PM</div>
<div class="t" style="top:483.96px;font-size:18.5px;line-height:18.5px;font-weight:400;color:#000;letter-spacing:0.05px;right:1947.95px;text-align:right;">09/23/2025 11:02 PM</div>
<div class="t" style="top:510.94px;font-size:18.5px;line-height:18.5px;font-weight:400;color:#000;letter-spacing:0.05px;right:1947.95px;text-align:right;">09/23/2025 10:52 PM</div>
<div class="t" style="top:537.93px;font-size:18.5px;line-height:18.5px;font-weight:400;color:#000;letter-spacing:0.05px;right:1947.95px;text-align:right;">09/23/2025 10:49 PM</div>
<div class="t" style="top:564.91px;font-size:18.5px;line-height:18.5px;font-weight:400;color:#000;letter-spacing:0.05px;right:1947.95px;text-align:right;">09/23/2025 10:28 PM</div>
<div class="t" style="top:591.90px;font-size:18.5px;line-height:18.5px;font-weight:400;color:#000;letter-spacing:0.05px;right:1947.95px;text-align:right;">09/23/2025 10:27 PM</div>
<div class="t" style="top:618.88px;font-size:18.5px;line-height:18.5px;font-weight:400;color:#000;letter-spacing:0.05px;right:1947.95px;text-align:right;">09/23/2025 10:06 PM</div>
<div class="t" style="top:645.87px;font-size:18.5px;line-height:18.5px;font-weight:400;color:#000;letter-spacing:0.05px;right:1947.95px;text-align:right;">09/23/2025 9:45 PM</div>
<div class="t" style="top:672.85px;font-size:18.5px;line-height:18.5px;font-weight:400;color:#000;letter-spacing:0.05px;right:1947.95px;text-align:right;">09/23/2025 9:44 PM</div>
<div class="t" style="top:699.84px;font-size:18.5px;line-height:18.5px;font-weight:400;color:#000;letter-spacing:0.05px;right:1947.95px;text-align:right;">09/23/2025 9:22 PM</div>
<div class="t" style="top:726.82px;font-size:18.5px;line-height:18.5px;font-weight:400;color:#000;letter-spacing:0.05px;right:1947.95px;text-align:right;">09/23/2025 9:22 PM</div>
<div class="t" style="top:753.81px;font-size:18.5px;line-height:18.5px;font-weight:400;color:#000;letter-spacing:0.05px;right:1947.95px;text-align:right;">09/23/2025 9:18 PM</div>
<div class="t" style="top:780.79px;font-size:18.5px;line-height:18.5px;font-weight:400;color:#000;letter-spacing:0.05px;right:1947.95px;text-align:right;">09/23/2025 9:17 PM</div>
<div class="t" style="top:807.78px;font-size:18.5px;line-height:18.5px;font-weight:400;color:#000;letter-spacing:0.05px;right:1947.95px;text-align:right;">09/23/2025 9:09 PM</div>
<div class="t" style="top:834.76px;font-size:18.5px;line-height:18.5px;font-weight:400;color:#000;letter-spacing:0.05px;right:1947.95px;text-align:right;">09/23/2025 8:57 PM</div>
<div class="t" style="top:861.75px;font-size:18.5px;line-height:18.5px;font-weight:400;color:#000;letter-spacing:0.05px;right:1947.95px;text-align:right;">09/23/2025 8:57 PM</div>
<div class="t" style="top:888.73px;font-size:18.5px;line-height:18.5px;font-weight:400;color:#000;letter-spacing:0.05px;right:1947.95px;text-align:right;">09/23/2025 8:56 PM</div>
<div class="t" style="top:915.72px;font-size:18.5px;line-height:18.5px;font-weight:400;color:#000;letter-spacing:0.05px;right:1947.95px;text-align:right;">09/23/2025 8:54 PM</div>
<div class="t" style="top:942.70px;font-size:18.5px;line-height:18.5px;font-weight:400;color:#000;letter-spacing:0.05px;right:1947.95px;text-align:right;">09/23/2025 8:53 PM</div>
<div class="t" style="top:969.69px;font-size:18.5px;line-height:18.5px;font-weight:400;color:#000;letter-spacing:0.05px;right:1947.95px;text-align:right;">09/23/2025 8:53 PM</div>
<div class="t" style="top:996.67px;font-size:18.5px;line-height:18.5px;font-weight:400;color:#000;letter-spacing:0.05px;right:1947.95px;text-align:right;">09/23/2025 8:50 PM</div>
<div class="t" style="top:1023.66px;font-size:18.5px;line-height:18.5px;font-weight:400;color:#000;letter-spacing:0.05px;right:1947.95px;text-align:right;">09/23/2025 8:50 PM</div>
<div class="t" style="top:1050.64px;font-size:18.5px;line-height:18.5px;font-weight:400;color:#000;letter-spacing:0.05px;right:1947.95px;text-align:right;">09/23/2025 8:33 PM</div>
<div class="t" style="top:1077.63px;font-size:18.5px;line-height:18.5px;font-weight:400;color:#000;letter-spacing:0.05px;right:1947.95px;text-align:right;">09/23/2025 8:33 PM</div>
<div class="t" style="top:1104.61px;font-size:18.5px;line-height:18.5px;font-weight:400;color:#000;letter-spacing:0.05px;right:1947.95px;text-align:right;">09/23/2025 8:16 PM</div>
<div class="t" style="top:1131.60px;font-size:18.5px;line-height:18.5px;font-weight:400;color:#000;letter-spacing:0.05px;right:1947.95px;text-align:right;">09/23/2025 8:09 PM</div>
<div class="t" style="top:1158.58px;font-size:18.5px;line-height:18.5px;font-weight:400;color:#000;letter-spacing:0.05px;right:1947.95px;text-align:right;">09/23/2025 8:09 PM</div>
<div class="t" style="top:1185.57px;font-size:18.5px;line-height:18.5px;font-weight:400;color:#000;letter-spacing:0.05px;right:1947.95px;text-align:right;">09/23/2025 8:04 PM</div>
<div class="t" style="top:1212.55px;font-size:18.5px;line-height:18.5px;font-weight:400;color:#000;letter-spacing:0.05px;right:1947.95px;text-align:right;">09/23/2025 8:03 PM</div>
<div class="t" style="top:1239.54px;font-size:18.5px;line-height:18.5px;font-weight:400;color:#000;letter-spacing:0.05px;right:1947.95px;text-align:right;">09/23/2025 7:54 PM</div>
<div class="t" style="top:1266.52px;font-size:18.5px;line-height:18.5px;font-weight:400;color:#000;letter-spacing:0.05px;right:1947.95px;text-align:right;">09/23/2025 7:54 PM</div>
<div class="t" style="top:1293.51px;font-size:18.5px;line-height:18.5px;font-weight:400;color:#000;letter-spacing:0.05px;right:1947.95px;text-align:right;">09/23/2025 7:48 PM</div>
<div class="t" style="top:1320.49px;font-size:18.5px;line-height:18.5px;font-weight:400;color:#000;letter-spacing:0.05px;right:1947.95px;text-align:right;">09/23/2025 7:46 PM</div>
</div></div>
<div class="t" style="top:186.76px;font-size:18.6px;line-height:18.6px;font-weight:700;color:#000;letter-spacing:0.2px;left:106.20px;">event</div>
<div class="t" style="top:187.09px;font-size:18.2px;line-height:18.2px;font-weight:700;color:#000;left:303.00px;">distinct_id</div>
<div class="t" style="top:186.76px;font-size:18.6px;line-height:18.6px;font-weight:700;color:#000;letter-spacing:0.3px;left:431.30px;">time</div>
<div class="t" style="top:161.31px;font-size:18.3px;line-height:18.3px;font-weight:700;color:#fff;letter-spacing:0.05px;left:128.90px;">Neon_Onboarding_Events</div>
<div class="t" style="top:163.53px;font-size:13.2px;line-height:13.2px;font-weight:400;color:#fff;letter-spacing:-0.2px;right:1950.30px;text-align:right;">19m ago</div>
<div class="t" style="top:161.31px;font-size:18.3px;line-height:18.3px;font-weight:700;color:#fff;letter-spacing:0.1px;left:671.30px;">Onboarding_Completion_Rate_Chart</div>
<div class="t" style="top:163.33px;font-size:13.2px;line-height:13.2px;font-weight:400;color:#fff;letter-spacing:-0.1px;right:1008.60px;text-align:right;">&lt; 1m ago</div>
<div class="t" style="top:228.97px;font-size:22.6px;line-height:22.6px;font-weight:400;color:#2a3f5f;letter-spacing:0.95px;left:692.00px;">Onboarding Completion Rate Over Time</div>
<div class="t" style="top:304.16px;font-size:15.4px;line-height:15.4px;font-weight:400;color:#2a3f5f;letter-spacing:0.9px;right:1816.60px;text-align:right;">110</div>
<div class="t" style="top:364.66px;font-size:15.4px;line-height:15.4px;font-weight:400;color:#2a3f5f;letter-spacing:0.9px;right:1816.60px;text-align:right;">105</div>
<div class="t" style="top:425.16px;font-size:15.4px;line-height:15.4px;font-weight:400;color:#2a3f5f;letter-spacing:0.9px;right:1816.60px;text-align:right;">100</div>
<div class="t" style="top:485.66px;font-size:15.4px;line-height:15.4px;font-weight:400;color:#2a3f5f;letter-spacing:0.9px;right:1816.60px;text-align:right;">95</div>
<div class="t" style="top:546.16px;font-size:15.4px;line-height:15.4px;font-weight:400;color:#2a3f5f;letter-spacing:0.9px;right:1816.60px;text-align:right;">90</div>
<div class="t" style="top:606.66px;font-size:15.4px;line-height:15.4px;font-weight:400;color:#2a3f5f;letter-spacing:0.9px;right:1816.60px;text-align:right;">85</div>
<div class="t" style="top:667.16px;font-size:15.4px;line-height:15.4px;font-weight:400;color:#2a3f5f;letter-spacing:0.9px;right:1816.60px;text-align:right;">80</div>
<div class="t" style="top:677.56px;font-size:15.4px;line-height:15.4px;font-weight:400;color:#2a3f5f;letter-spacing:0.9px;left:315.00px;width:1000px;text-align:center;">Jun 15</div>
<div class="t" style="top:677.56px;font-size:15.4px;line-height:15.4px;font-weight:400;color:#2a3f5f;letter-spacing:0.9px;left:407.22px;width:1000px;text-align:center;">Jun 29</div>
<div class="t" style="top:677.56px;font-size:15.4px;line-height:15.4px;font-weight:400;color:#2a3f5f;letter-spacing:0.9px;left:499.44px;width:1000px;text-align:center;">Jul 13</div>
<div class="t" style="top:677.56px;font-size:15.4px;line-height:15.4px;font-weight:400;color:#2a3f5f;letter-spacing:0.9px;left:591.65px;width:1000px;text-align:center;">Jul 27</div>
<div class="t" style="top:677.56px;font-size:15.4px;line-height:15.4px;font-weight:400;color:#2a3f5f;letter-spacing:0.9px;left:683.87px;width:1000px;text-align:center;">Aug 10</div>
<div class="t" style="top:677.56px;font-size:15.4px;line-height:15.4px;font-weight:400;color:#2a3f5f;letter-spacing:0.9px;left:776.09px;width:1000px;text-align:center;">Aug 24</div>
<div class="t" style="top:677.56px;font-size:15.4px;line-height:15.4px;font-weight:400;color:#2a3f5f;letter-spacing:0.9px;left:868.31px;width:1000px;text-align:center;">Sep 7</div>
<div class="t" style="top:677.56px;font-size:15.4px;line-height:15.4px;font-weight:400;color:#2a3f5f;letter-spacing:0.9px;left:960.53px;width:1000px;text-align:center;">Sep 21</div>
<div class="t" style="top:697.46px;font-size:15.4px;line-height:15.4px;font-weight:400;color:#2a3f5f;letter-spacing:0.9px;left:315.00px;width:1000px;text-align:center;">2025</div>
<div class="t" style="top:729.96px;font-size:18px;line-height:18px;font-weight:400;color:#2a3f5f;letter-spacing:0.6px;left:605.20px;width:1000px;text-align:center;">Date</div>
<div class="t" style="top:412.86px;font-size:15.4px;line-height:15.4px;font-weight:400;color:#2a3f5f;letter-spacing:1.1px;right:1106.40px;text-align:right;">100% Target</div>
<div class="t" style="left:388px;top:481px;width:600px;height:20px;line-height:20px;font-size:18px;letter-spacing:1.3px;color:#2a3f5f;text-align:center;transform:rotate(-90deg);transform-origin:300px 10px;">Completion Rate (%)</div>
<div class="t" style="top:87.65px;font-size:21.8px;line-height:21.8px;font-weight:400;color:#0b0b0b;letter-spacing:0.3px;left:90.80px;">W86</div>
<div class="t" style="top:87.85px;font-size:21.2px;line-height:21.2px;font-weight:400;color:#0b0b0b;letter-spacing:0.4px;left:2435.20px;">86%</div>
<div class="t" style="top:26.79px;font-size:18.2px;line-height:18.2px;font-weight:500;color:#0b0b0b;letter-spacing:0.2px;left:2472.00px;">Share</div>
<div class="t" style="top:1352.62px;font-size:18.4px;line-height:18.4px;font-weight:700;color:#2b63e8;left:151.10px;">Sheet 1</div>
<svg class="abs" style="left:0;top:0" width="2565" height="1386" viewBox="0 0 2565 1386"><rect x="25.5" y="20.2" width="8.8" height="8.6" fill="#c4858f"/><rect x="36.1" y="20.2" width="8.9" height="8.6" fill="#8ec283"/><rect x="25.5" y="31" width="8.8" height="8.5" fill="#55506a"/><rect x="36.1" y="31" width="8.9" height="8.5" fill="#80cdf4"/><rect x="36.1" y="41.3" width="8.9" height="8.9" fill="#f4c53c"/><path d="M31.5 102.6 L34.0 108.3 L39.7 110.8 L34.0 113.3 L31.5 119.0 L29.0 113.3 L23.3 110.8 L29.0 108.3 Z" fill="none" stroke="#4a5a72" stroke-width="1.8" stroke-linejoin="round"/><path d="M43.4 98.60000000000001 L44.65 101.45 L47.5 102.7 L44.65 103.95 L43.4 106.8 L42.15 103.95 L39.3 102.7 L42.15 101.45 Z" fill="#4a5a72" stroke="#4a5a72" stroke-width="0.9" stroke-linejoin="round"/><path d="M43.4 115.0 L44.65 117.85 L47.5 119.1 L44.65 120.35 L43.4 123.19999999999999 L42.15 120.35 L39.3 119.1 L42.15 117.85 Z" fill="#4a5a72" stroke="#4a5a72" stroke-width="0.9" stroke-linejoin="round"/><path d="M31.1 164.8 L24.9 171 L31.1 177.2 M39.3 164.8 L45.5 171 L39.3 177.2" fill="none" stroke="#4a5a72" stroke-width="1.9" stroke-linecap="round" stroke-linejoin="round"/><g fill="none" stroke="#4a5a72" stroke-width="1.8"><ellipse cx="35.2" cy="224.4" rx="9.9" ry="3.3"/><path d="M25.3 224.4 V236.7 C25.3 238.5 29.7 240 35.2 240 S45.1 238.5 45.1 236.7 V224.4"/><path d="M25.3 230.5 C25.3 232.3 29.7 233.8 35.2 233.8 S45.1 232.3 45.1 230.5"/></g><g fill="none" stroke="#4a5a72" stroke-width="1.8"><rect x="29.1" y="284.5" width="12.6" height="12.6" rx="1.8"/><rect x="32.6" y="288" width="5.6" height="5.6" stroke-width="1.6"/></g><g stroke="#4a5a72" stroke-width="1.7" stroke-linecap="round"><path d="M32.6 281v3.2M37.9 281v3.2M32.6 297.3v3.4M37.9 297.3v3.4M25.4 288.4h3.3M25.4 293.5h3.3M42 288.4h3.3M42 293.5h3.3"/></g><g stroke="#4a5a72" stroke-width="1.8" fill="none" stroke-linecap="butt"><path d="M23.2 346.7h5.8M23.2 352.2h5.8M23.2 357.8h11.8"/><circle cx="37.4" cy="349.2" r="4.9"/><path d="M41 352.8 L46.3 358.1" stroke-linecap="round"/></g><path d="M517.8 95.2 H529.1 L523.45 101 Z" fill="#4a5a72"/><path d="M2532.5 94.9 H2543.6 L2538.05 100.7 Z" fill="#4a5a72"/><line x1="1141.5" y1="80.5" x2="1141.5" y2="115.5" stroke="#e2e8f0" stroke-width="1.2"/><line x1="1202.7" y1="80.5" x2="1202.7" y2="115.5" stroke="#e2e8f0" stroke-width="1.2"/><line x1="1462.8" y1="80.5" x2="1462.8" y2="115.5" stroke="#e2e8f0" stroke-width="1.2"/><line x1="1577.8" y1="80.5" x2="1577.8" y2="115.5" stroke="#e2e8f0" stroke-width="1.2"/><line x1="1741.5" y1="80.5" x2="1741.5" y2="115.5" stroke="#e2e8f0" stroke-width="1.2"/><g fill="none" stroke="#4a5a72" stroke-width="1.9" stroke-linecap="round"><circle cx="860.1" cy="96" r="2.75"/><path d="M862.6 97.6 L858.7 103.3"/><circle cx="869.3" cy="96" r="2.75"/><path d="M871.8 97.6 L867.9 103.3"/></g><rect x="900.7" y="96.7" width="3" height="3" fill="#4a5a72"/><rect x="907" y="87.6" width="6.2" height="11.1" rx="3.1" fill="none" stroke="#4a5a72" stroke-width="1.9"/><path d="M923.8 105.6 H914 M917.3 102.2 L913.9 105.6 L917.3 109" fill="none" stroke="#4a5a72" stroke-width="1.8" stroke-linecap="round" stroke-linejoin="round"/><rect x="948.6" y="96.7" width="3" height="3" fill="#4a5a72"/><rect x="954.9" y="87.6" width="6.2" height="11.1" rx="3.1" fill="none" stroke="#4a5a72" stroke-width="1.9"/><rect x="965.9" y="87.6" width="6.2" height="11.1" rx="3.1" fill="none" stroke="#4a5a72" stroke-width="1.9"/><path d="M961.4 105.6 H971.2 M967.9 102.2 L971.3 105.6 L967.9 109" fill="none" stroke="#4a5a72" stroke-width="1.8" stroke-linecap="round" stroke-linejoin="round"/><path d="M1012.6 93.1 C1011.8 91.6 1010.4 90.9 1008.8 90.9 C1006.4 90.9 1004.7 92.4 1004.7 94.5 C1004.7 96.9 1006.9 97.7 1008.8 98.3 C1011.1 99 1013 100 1013 102.3 C1013 104.2 1011.2 105.4 1008.8 105.4 C1006.8 105.4 1005.4 104.5 1004.4 102.8" fill="none" stroke="#4a5a72" stroke-width="1.9" stroke-linecap="round"/><path d="M1008.8 87.8 V90.9 M1008.8 105.4 V108.4" stroke="#4a5a72" stroke-width="1.9" stroke-linecap="round"/><g fill="none" stroke="#4a5a72" stroke-width="1.8"><circle cx="1051.5" cy="92.9" r="2.6"/><circle cx="1061.9" cy="103.3" r="2.6"/><path d="M1049.2 105.6 L1064.2 90.3" stroke-linecap="round"/></g><g fill="none" stroke="#4a5a72" stroke-width="2" stroke-linejoin="round"><path d="M1090.9 94 H1094.6 V103.3"/><path d="M1099.8 94 H1106.1 V98.1 H1100.7 V102.4 H1106.9"/><path d="M1109.9 94 H1116.7 V102.4 H1109.9 M1111.5 98.1 H1116.7"/></g><g fill="none" stroke="#4a5a72" stroke-width="1.8"><rect x="1163" y="90.3" width="18.6" height="18.3" rx="2.6"/><path d="M1163 95.5 H1181.6" /><path d="M1167.3 86.4 V89.8 M1177.2 86.4 V89.8" stroke-linecap="round"/></g><g fill="#4a5a72"><circle cx="1167.3" cy="100.2" r="1.05"/><circle cx="1172.2" cy="100.2" r="1.05"/><circle cx="1177.2" cy="100.2" r="1.05"/><circle cx="1167.3" cy="104.6" r="1.05"/><circle cx="1172.2" cy="104.6" r="1.05"/><circle cx="1177.2" cy="104.6" r="1.05"/></g><text x="1226.6" y="107" font-family="Liberation Sans" font-weight="700" font-size="24.3" fill="#4a5a72" textLength="14" lengthAdjust="spacingAndGlyphs">B</text><path d="M1277.6 90.8 H1289.6 M1273.6 105.7 H1285.8 M1284.4 90.8 L1279.3 105.7" fill="none" stroke="#4a5a72" stroke-width="2.4"/><path d="M1325 87.9 V98.3 C1325 101.9 1327 103.6 1329.6 103.6 S1334.5 101.9 1334.5 98.3 V87.9" fill="none" stroke="#4a5a72" stroke-width="2.6"/><path d="M1323 107.6 H1336.4" stroke="#4a5a72" stroke-width="1.8" stroke-linecap="round"/><g fill="#4a5a72"><rect x="1370.3" y="89.3" width="14.7" height="2.4"/><rect x="1376.3" y="91.5" width="2.7" height="4.3"/><rect x="1366" y="98.3" width="23.7" height="1.9" rx="0.9"/><rect x="1376.3" y="103.2" width="2.7" height="3.8"/></g><path d="M1424.4 87.1 H1427.2 L1433.9 104.3 H1431.3 L1429.6 99.6 H1422 L1420.3 104.3 H1417.7 Z M1422.7 97.5 H1428.9 L1425.8 89.4 Z" fill="#727272" fill-rule="evenodd"/><rect x="1413.2" y="108.1" width="24.8" height="4.7" fill="#727272"/><path d="M1487.4 84.8 L1498.6 95.6 L1490.5 103.5 L1482.5 95.6 L1489.6 88.4" fill="none" stroke="#747474" stroke-width="1.9" stroke-linejoin="round" stroke-linecap="round"/><path d="M1483.4 96.3 H1497.7 L1490.5 103.3 Z" fill="#747474"/><path d="M1501.9 98.3 C1502.9 99.8 1504.2 101 1504.2 102.2 C1504.2 103.5 1503.2 104.4 1501.9 104.4 C1500.6 104.4 1499.6 103.5 1499.6 102.2 C1499.6 101 1500.9 99.8 1501.9 98.3Z" fill="#747474"/><rect x="1481" y="108.2" width="24.6" height="4.5" fill="#747474"/><g fill="none" stroke="#4a5a72" stroke-width="1.9"><rect x="1532" y="89" width="18.6" height="18.6"/><path d="M1541.3 89 V107.6 M1532 98.3 H1550.6"/></g><g stroke="#4a5a72" stroke-width="1.8" stroke-linecap="round"><path d="M1599.2 88.9 H1618.5 M1599.2 93.4 H1612.6 M1599.2 98.1 H1618.5 M1599.2 102.9 H1612.6 M1599.2 107.6 H1618.5"/></g><g fill="none" stroke="#4a5a72" stroke-width="1.8" stroke-linecap="round"><path d="M1648.8 88.9 H1665 M1656.7 108.1 V93.6 M1651.6 98.4 L1656.7 93.3 L1661.7 98.4"/></g><g fill="none" stroke="#4a5a72" stroke-width="1.8" stroke-linecap="round"><path d="M1696.8 90 V106.2 M1705.8 90 V93.9 M1705.8 102.3 V106.2 M1701 98.2 H1712.3 M1709.1 94.9 L1712.4 98.2 L1709.1 101.5"/></g><path d="M1761.6 89 L1781.2 108.9" stroke="#4a5a72" stroke-width="2.3" stroke-linecap="round"/><path d="M1768.8 90.9 H1780.9 V93.5 H1774.1 L1772.8 95.6 Z" fill="#4a5a72"/><path d="M1769.6 97.4 L1772.2 100 L1769.4 105.6 H1766.2 Z" fill="#4a5a72"/><defs><clipPath id="av"><circle cx="2416" cy="35.1" r="18"/></clipPath><linearGradient id="avbg" x1="0" y1="0" x2="1" y2="0.2"><stop offset="0" stop-color="#5d6168"/><stop offset="0.55" stop-color="#51555c"/><stop offset="1" stop-color="#383b40"/></linearGradient></defs><g clip-path="url(#av)"><rect x="2397" y="16" width="38" height="38" fill="url(#avbg)"/><path d="M2410.3 36.5 L2420 35.5 L2421 39 L2414 46.5 L2410.8 40.5 Z" fill="#b38c74"/><path d="M2396 54 L2398.5 46.8 C2403 44 2407.5 41.8 2410.8 40.5 L2414 46.5 L2421 38.9 C2425.5 40.4 2430.5 42.4 2434 44.2 L2437 54 Z" fill="#0f1213"/><ellipse cx="2414.4" cy="32.3" rx="6.4" ry="7.6" fill="#c7a089"/><path d="M2409.5 35 C2410 38.5 2412 40 2414.4 40 C2416.8 40 2418.8 38.5 2419.3 35 C2418 37 2416.5 37.5 2414.4 37.5 C2412.3 37.5 2410.8 37 2409.5 35Z" fill="#6f5646"/><path d="M2407.8 29.5 C2407.3 23.2 2410.3 20.8 2414.6 20.8 C2419 20.8 2421.8 23.5 2421.3 29.5 C2420.5 26.5 2418.6 25.5 2414.6 25.5 C2410.8 25.5 2408.7 26.5 2407.8 29.5Z" fill="#141211"/><circle cx="2411.8" cy="30.3" r="0.9" fill="#3a2a22"/><circle cx="2417.4" cy="30.3" r="0.9" fill="#3a2a22"/><path d="M2412 35.3 Q2414.5 36.8 2417 35.3" stroke="#efe4dc" stroke-width="1" fill="none"/></g><circle cx="2416" cy="35.1" r="17.7" fill="none" stroke="#2d3035" stroke-width="0.8"/><rect x="2453" y="12.2" width="86.8" height="45.8" rx="4.5" fill="#fff" stroke="#dfe5ee" stroke-width="1.5"/><path d="M226 1358.8 H236.9 L231.45 1364.7 Z" fill="#2b63e8"/><path d="M101.8 1353.8 V1368.6 M94.4 1361.2 H109.2" stroke="#0b0b0b" stroke-width="2.1"/><path d="M2479 1354.6 L2472 1361.2 L2479 1367.6 M2531.2 1354.6 L2538.2 1361.2 L2531.2 1367.6" fill="none" stroke="#6b7079" stroke-width="1.9" stroke-linecap="round" stroke-linejoin="round"/></svg>
<div class="t" style="top:26.79px;font-size:18.2px;line-height:18.2px;font-weight:500;color:#0b0b0b;letter-spacing:0.2px;left:2472.00px;">Share</div>
</body></html>
